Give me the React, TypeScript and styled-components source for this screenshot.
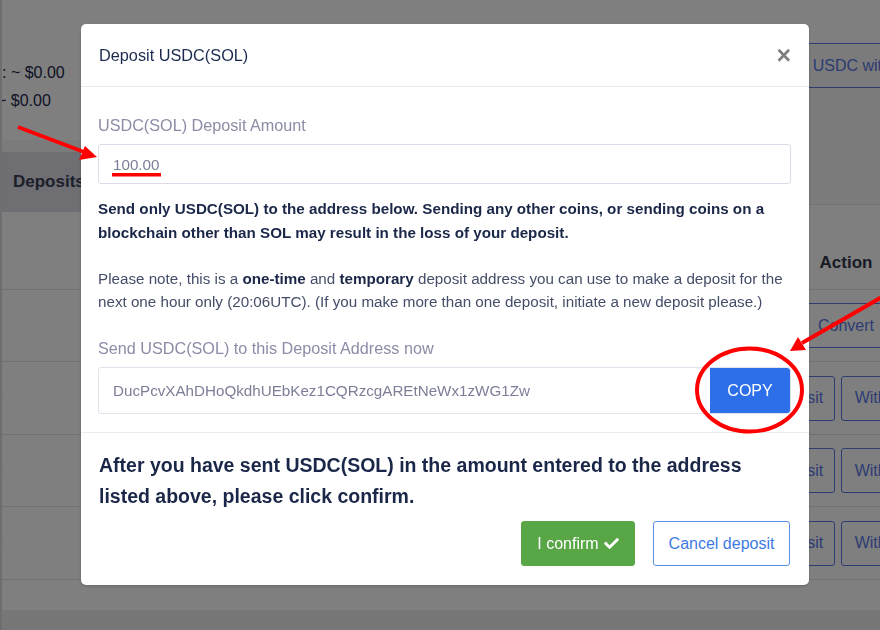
import React from "react";
import styled, { createGlobalStyle } from "styled-components";
import { FaCheck } from "react-icons/fa";

const Global = createGlobalStyle`
  html, body { margin: 0; padding: 0; }
  body {
    width: 880px;
    height: 630px;
    overflow: hidden;
    font-family: "Liberation Sans", Arial, sans-serif;
    background: #ffffff;
  }
  * { box-sizing: border-box; }
`;

/* ---------- underlying page ---------- */
const Page = styled.div`
  width: 880px;
  height: 630px;
  overflow: hidden;
  background: #fff;
  border-left: 2px solid #dcdcdc;
  display: flex;
  flex-direction: column;
`;

const TopRow = styled.div`
  height: 140px;
  display: flex;
  align-items: flex-start;
  justify-content: space-between;
  flex-shrink: 0;
`;

const Balances = styled.div`
  padding-top: 59px;
  font-size: 16px;
  line-height: 28px;
  color: #1b2749;
`;

const BalanceLine = styled.div<{ $shift: number }>`
  margin-left: ${(p) => p.$shift}px;
  white-space: nowrap;
`;

const TopAside = styled.div`
  width: 138px;
  height: 140px;
  padding-top: 43px;
  background: linear-gradient(#fff 0 45px, #f6f6f6 45px);
  flex-shrink: 0;
`;

const OutlineBtn = styled.div`
  height: 45px;
  border: 1px solid #5a78e6;
  border-radius: 3px;
  color: #5a78e6;
  font-size: 16px;
  display: flex;
  align-items: center;
  padding: 0 10px;
  white-space: nowrap;
  width: 240px;
  margin-left: 1px;
`;

const TabBar = styled.div`
  height: 65px;
  background: #f6f6f6;
  border-bottom: 1px solid #e8e8e8;
  display: flex;
  align-items: flex-end;
  flex-shrink: 0;
`;

const Tab = styled.div`
  height: 60px;
  width: 100px;
  margin-bottom: -8px;
  background: #dcdce6;
  color: #3a3f55;
  font-weight: 700;
  font-size: 17px;
  display: flex;
  align-items: center;
  padding-left: 11px;
`;

const Table = styled.div`
  width: 936px;
  display: grid;
  grid-template-columns: 756px 176px;
`;

const Cell = styled.div<{ $h: number }>`
  height: ${(p) => p.$h}px;
  border-bottom: 1px solid #dee2e6;
  display: flex;
  align-items: center;
  justify-content: center;
  gap: 6px;
`;

const LeftCell = styled(Cell)`
  justify-content: flex-start;
  color: #5a1a22;
  font-size: 17px;
`;

const HeadText = styled.div`
  font-weight: 700;
  font-size: 17px;
  color: #33364a;
  padding-top: 32px;
`;

const RowBtn = styled.div<{ $w: number }>`
  height: 45px;
  width: ${(p) => p.$w}px;
  flex-shrink: 0;
  border: 1px solid #5a78e6;
  border-radius: 3px;
  color: #5a78e6;
  font-size: 16px;
  display: flex;
  align-items: center;
  justify-content: center;
`;

const Clip = styled.span`
  margin-left: -9px;
`;

const BottomBand = styled.div`
  margin-top: auto;
  height: 20px;
  background: #eeeeee;
  flex-shrink: 0;
`;

/* ---------- modal ---------- */
const Backdrop = styled.div`
  position: fixed;
  inset: 0;
  background: rgba(0, 0, 0, 0.5);
`;

const DialogLayer = styled.div`
  position: fixed;
  inset: 0;
  padding: 24px 0 0 81px;
`;

const Dialog = styled.div`
  width: 728px;
  background: #fff;
  border-radius: 5px;
  box-shadow: 0 1px 3px rgba(0, 0, 0, 0.2);
`;

const Header = styled.div`
  height: 63px;
  border-bottom: 1px solid #e9ecef;
  display: flex;
  align-items: center;
  justify-content: space-between;
  padding: 0 18px 0 18px;
`;

const Title = styled.h5`
  margin: 0;
  font-weight: 400;
  font-size: 16.3px;
  color: #1b2a4e;
`;

const Close = styled.span`
  font-size: 25px;
  font-weight: 700;
  color: #000;
  opacity: 0.5;
  line-height: 1;
`;

const Body = styled.div`
  padding: 26px 18px 18px 17px;
`;

const Label = styled.div`
  font-size: 16.2px;
  line-height: 24px;
  color: #8b8da6;
  margin-bottom: 7px;
`;

const TextField = styled.div`
  height: 40px;
  border: 1px solid #dcdbe9;
  border-radius: 3px;
  display: flex;
  align-items: center;
  padding-left: 14px;
  font-size: 15.2px;
  color: #7c7e98;
`;

const Warning = styled.p`
  margin: 13px 0 0;
  font-weight: 700;
  font-size: 15.2px;
  line-height: 24px;
  color: #1b2749;
`;

const Note = styled.p`
  margin: 22px 0 23px;
  font-size: 15.2px;
  line-height: 23px;
  color: #454e68;
  b { color: #1b2749; }
`;

const AddressGroup = styled.div`
  height: 47px;
  border: 1px solid #e2e2ec;
  border-radius: 3px;
  display: flex;
  align-items: stretch;
`;

const AddressText = styled.div`
  flex: 1;
  display: flex;
  align-items: center;
  padding-left: 14px;
  font-size: 15.2px;
  color: #7c7e98;
`;

const CopyBtn = styled.div`
  width: 80px;
  background: #2d6fe8;
  color: #fff;
  font-size: 16px;
  display: flex;
  align-items: center;
  justify-content: center;
  border-radius: 0 3px 3px 0;
`;

const Footer = styled.div`
  border-top: 1px solid #e9ecef;
  padding: 17px 19px 19px 18px;
`;

const FooterText = styled.div`
  font-weight: 700;
  font-size: 19.5px;
  line-height: 31px;
  color: #1b2749;
`;

const Actions = styled.div`
  margin-top: 9px;
  display: flex;
  justify-content: flex-end;
  gap: 18px;
`;

const Btn = styled.div<{ $variant: "confirm" | "cancel" }>`
  height: 45px;
  border-radius: 3px;
  font-size: 16px;
  display: flex;
  align-items: center;
  justify-content: center;
  gap: 5px;
  ${(p) =>
    p.$variant === "confirm"
      ? `width: 114px; background: #58a646; color: #fff; border: 1px solid #58a646;`
      : `width: 137px; background: #fff; color: #3d7be3; border: 1px solid #5b8fe8;`}
`;

const Annotations = styled.svg`
  position: fixed;
  inset: 0;
  pointer-events: none;
`;

export default function App() {
  const rows = [
    { h: 72, kind: "convert" },
    { h: 73, kind: "dw", mark: true },
    { h: 72, kind: "dw", mark: true },
    { h: 73, kind: "dw", mark: true },
  ];
  return (
    <>
      <Global />
      <Page>
        <TopRow>
          <Balances>
            <BalanceLine $shift={0}>: ~ $0.00</BalanceLine>
            <BalanceLine $shift={-5}>~ $0.00</BalanceLine>
          </Balances>
          <TopAside>
            <OutlineBtn>Deposit USDC with card</OutlineBtn>
          </TopAside>
        </TopRow>
        <TabBar>
          <Tab>Deposits</Tab>
        </TabBar>
        <Table>
          <LeftCell $h={85} />
          <Cell $h={85}>
            <HeadText>Action</HeadText>
          </Cell>
          {rows.map((r, i) => (
            <React.Fragment key={i}>
              <LeftCell $h={r.h}>{r.mark ? <Clip>0</Clip> : null}</LeftCell>
              <Cell $h={r.h}>
                {r.kind === "convert" ? (
                  <RowBtn $w={78}>Convert</RowBtn>
                ) : (
                  <>
                    <RowBtn $w={78}>Deposit</RowBtn>
                    <RowBtn $w={94}>Withdraw</RowBtn>
                  </>
                )}
              </Cell>
            </React.Fragment>
          ))}
        </Table>
        <BottomBand />
      </Page>

      <Backdrop />
      <DialogLayer>
        <Dialog>
          <Header>
            <Title>Deposit USDC(SOL)</Title>
            <Close>×</Close>
          </Header>
          <Body>
            <Label>USDC(SOL) Deposit Amount</Label>
            <TextField>100.00</TextField>
            <Warning>
              Send only USDC(SOL) to the address below. Sending any other coins, or sending coins on a
              blockchain other than SOL may result in the loss of your deposit.
            </Warning>
            <Note>
              Please note, this is a <b>one-time</b> and <b>temporary</b> deposit address you can use
              to make a deposit for the next one hour only (20:06UTC). (If you make more than one
              deposit, initiate a new deposit please.)
            </Note>
            <Label>Send USDC(SOL) to this Deposit Address now</Label>
            <AddressGroup>
              <AddressText>DucPcvXAhDHoQkdhUEbKez1CQRzcgAREtNeWx1zWG1Zw</AddressText>
              <CopyBtn>COPY</CopyBtn>
            </AddressGroup>
          </Body>
          <Footer>
            <FooterText>
              After you have sent USDC(SOL) in the amount entered to the address listed above, please
              click confirm.
            </FooterText>
            <Actions>
              <Btn $variant="confirm">
                I confirm <FaCheck size={15} />
              </Btn>
              <Btn $variant="cancel">Cancel deposit</Btn>
            </Actions>
          </Footer>
        </Dialog>
      </DialogLayer>

      <Annotations width={880} height={630} viewBox="0 0 880 630">
        <line x1={18} y1={127} x2={84} y2={152} stroke="#ff0000" strokeWidth={4} />
        <polygon points="97,157 79,160 85,146" fill="#ff0000" />
        <rect x={112} y={173} width={49} height={3.5} fill="#ff0000" />
        <line x1={882} y1={297} x2={802} y2={343} stroke="#ff0000" strokeWidth={4} />
        <polygon points="790,351 798,337 806,350" fill="#ff0000" />
        <ellipse cx={749.5} cy={390} rx={52.5} ry={41.5} fill="none" stroke="#ff0000" strokeWidth={4} />
      </Annotations>
    </>
  );
}
